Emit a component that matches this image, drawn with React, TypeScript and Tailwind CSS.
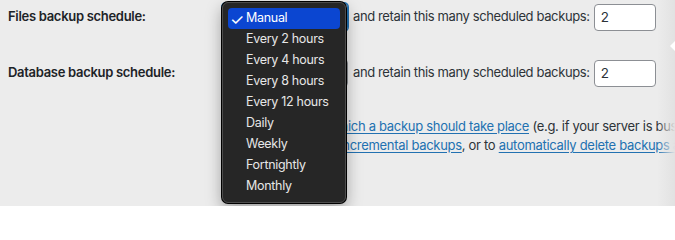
const options = [
  "Manual",
  "Every 2 hours",
  "Every 4 hours",
  "Every 8 hours",
  "Every 12 hours",
  "Daily",
  "Weekly",
  "Fortnightly",
  "Monthly",
];

function ScheduleRow({ label, focused }: { label: string; focused?: boolean }) {
  return (
    <div className="flex h-[28px] items-center whitespace-nowrap">
      <span className="w-[214px] shrink-0 text-[13px] font-semibold tracking-[-0.3px] text-[#1d2327]">
        {label}
      </span>
      <div
        className={`h-[28px] w-[126px] shrink-0 rounded-[4px] border bg-white ${
          focused ? "border-[#2271b1] shadow-[0_0_0_1px_#2271b1]" : "border-[#8c8f94]"
        }`}
      />
      <span className="ml-[5px] shrink-0 text-[13px] tracking-[-0.38px] text-[#2c3338]">
        and retain this many scheduled backups:
      </span>
      <div className="ml-[4px] flex h-[27px] w-[62px] shrink-0 items-center rounded-[4px] border border-[#8c8f94] bg-white px-[6px] text-[13.5px] text-[#2c3338]">
        2
      </div>
    </div>
  );
}

export default function App() {
  return (
    <div className="relative h-[206px] w-[675px] overflow-hidden bg-[#ececec] font-['Inter','Liberation_Sans',sans-serif]">
      <div className="flex w-[1000px] flex-col pl-2 pt-[3px]">
        <ScheduleRow label="Files backup schedule:" focused />
        <div className="mt-[28px]">
          <ScheduleRow label="Database backup schedule:" />
        </div>
        <p className="mt-[30px] ml-[222px] whitespace-nowrap text-[13px] leading-[19px] tracking-[-0.3px] text-[#2c3338]">
          To{" "}
          <a className="text-[#2271b1] underline underline-offset-2">
            fix the time at which a backup should take place
          </a>{" "}
          (e.g. if your server is busy at day and you want to run
          <br />
          overnight), to take{" "}
          <a className="text-[#2271b1] underline underline-offset-2">incremental backups</a>, or to{" "}
          <a className="text-[#2271b1] underline underline-offset-2">
            automatically delete backups after a certain time
          </a>
        </p>
      </div>

      <div className="pointer-events-none absolute inset-y-0 right-0 w-[18px] bg-gradient-to-r from-transparent to-[#e2e2e2]" />
      <div className="absolute right-0 top-[41px] h-0 w-0 border-y-[5px] border-r-[5px] border-y-transparent border-r-white" />

      <div className="absolute left-[222px] top-[2px] w-[124px] rounded-[6px] border border-[#4d4d4d] bg-[#262626] px-[5px] py-[5px] shadow-[0_0_0_1px_#000,0_6px_16px_rgba(0,0,0,0.35)]">
        {options.map((option, index) => (
          <div
            key={option}
            className={`flex h-[21px] items-center rounded-[4px] text-[12.5px] tracking-[-0.3px] ${
              index === 0 ? "bg-[#0b46d1] text-white" : "text-[#e6e6e6]"
            }`}
          >
            <span className="w-[18px] pl-[2px] text-[16px] leading-none">{index === 0 ? "✓" : ""}</span>
            {option}
          </div>
        ))}
      </div>
    </div>
  );
}
